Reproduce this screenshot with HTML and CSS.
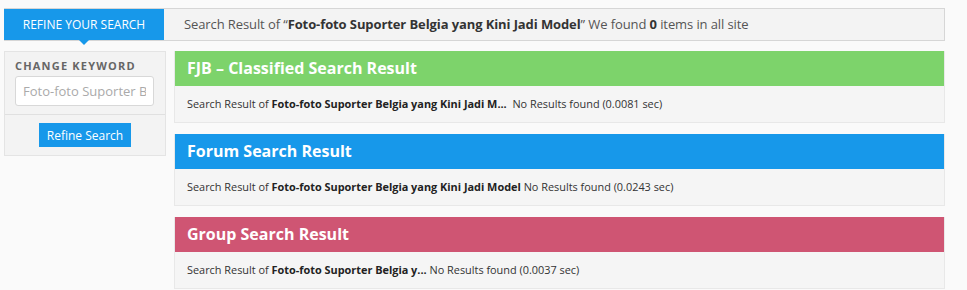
FILE: index.html
```html
<!DOCTYPE html>
<html lang="id">
<head>
    <meta charset="UTF-8">
    <meta name="viewport" content="width=device-width, initial-scale=1.0">
    <title>Search Result</title>
    <link rel="stylesheet" href="styles.css">
</head>
<body>
    <div class="wrapper">
        <div class="search-bar">
            <div class="tab">Refine your search</div>
            <div class="summary">Search Result of “<b>Foto-foto Suporter Belgia yang Kini Jadi Model</b>” We found <b>0</b> items in all site</div>
        </div>
        <div class="content">
            <div class="sidebar">
                <div class="keyword">
                    <label for="keyword">Change Keyword</label>
                    <input type="text" id="keyword" placeholder="Foto-foto Suporter Belgia yang Kini Jadi Model">
                </div>
                <div class="actions">
                    <button>Refine Search</button>
                </div>
            </div>
            <div class="results">
                <div class="card">
                    <div class="card-title green">FJB – Classified Search Result</div>
                    <div class="card-body">Search Result of <b>Foto-foto Suporter Belgia yang Kini Jadi M...</b>&nbsp; No Results found (0.0081 sec)</div>
                </div>
                <div class="card">
                    <div class="card-title blue">Forum Search Result</div>
                    <div class="card-body">Search Result of <b>Foto-foto Suporter Belgia yang Kini Jadi Model</b> No Results found (0.0243 sec)</div>
                </div>
                <div class="card">
                    <div class="card-title pink">Group Search Result</div>
                    <div class="card-body">Search Result of <b>Foto-foto Suporter Belgia y...</b> No Results found (0.0037 sec)</div>
                </div>
            </div>
        </div>
    </div>
</body>
</html>
```

FILE: styles.css
```css
body {
    font-family: "Open Sans", Arial, sans-serif;
    background-color: #fafafa;
    color: #333;
    margin: 0;
    padding: 0;
}
.wrapper {
    width: 941px;
    padding: 8px 4px 0;
}
.search-bar {
    display: flex;
    align-items: stretch;
    height: 31px;
    background-color: #f3f3f3;
    border: 1px solid #d6d6d6;
    border-left: none;
}
.tab {
    position: relative;
    width: 160px;
    background-color: #1798ea;
    color: #fff;
    font-size: 12px;
    text-transform: uppercase;
    line-height: 31px;
    text-align: center;
}
.tab:after {
    content: "";
    position: absolute;
    left: 75px;
    bottom: -5px;
    border-left: 5px solid transparent;
    border-right: 5px solid transparent;
    border-top: 5px solid #1798ea;
}
.summary {
    padding-left: 20px;
    font-size: 13px;
    letter-spacing: -0.1px;
    line-height: 31px;
    color: #555;
}
.summary b {
    color: #333;
}
.content {
    display: flex;
    gap: 8px;
    margin-top: 10px;
}
.sidebar {
    width: 160px;
    flex-shrink: 0;
    align-self: flex-start;
    background-color: #f3f3f3;
    border: 1px solid #e4e4e4;
}
.keyword {
    padding: 6px 10px 8px;
    border-bottom: 1px solid #e0e0e0;
}
.keyword label {
    display: block;
    font-size: 11px;
    font-weight: bold;
    text-transform: uppercase;
    letter-spacing: 1.2px;
    color: #666;
    line-height: 16px;
    margin-bottom: 2px;
}
.keyword input {
    display: block;
    box-sizing: border-box;
    width: 139px;
    height: 30px;
    padding: 0 7px;
    font-family: inherit;
    font-size: 13px;
    border: 1px solid #d8d8d8;
    border-radius: 3px;
    background-color: #fff;
}
.keyword input::placeholder {
    color: #aaa;
}
.actions {
    padding: 8px 0 8px;
    text-align: center;
}
.actions button {
    display: block;
    margin: 0 auto;
    width: 92px;
    height: 24px;
    border: none;
    background-color: #1798ea;
    color: #fff;
    font-family: inherit;
    font-size: 12px;
    padding: 0;
}
.results {
    flex: 1;
}
.card {
    margin-bottom: 11px;
    border: 1px solid #e8e8e8;
    border-top: none;
    background-color: #f5f5f5;
}
.card-title {
    height: 35px;
    line-height: 35px;
    padding-left: 12px;
    color: #fff;
    font-size: 16px;
    font-weight: bold;
}
.green {
    background-color: #7dd36b;
}
.blue {
    background-color: #1798ea;
}
.pink {
    background-color: #cf5573;
}
.card-body {
    height: 36px;
    line-height: 36px;
    padding-left: 12px;
    font-size: 10.9px;
    color: #333;
}
.card-body b {
    color: #222;
}
```
